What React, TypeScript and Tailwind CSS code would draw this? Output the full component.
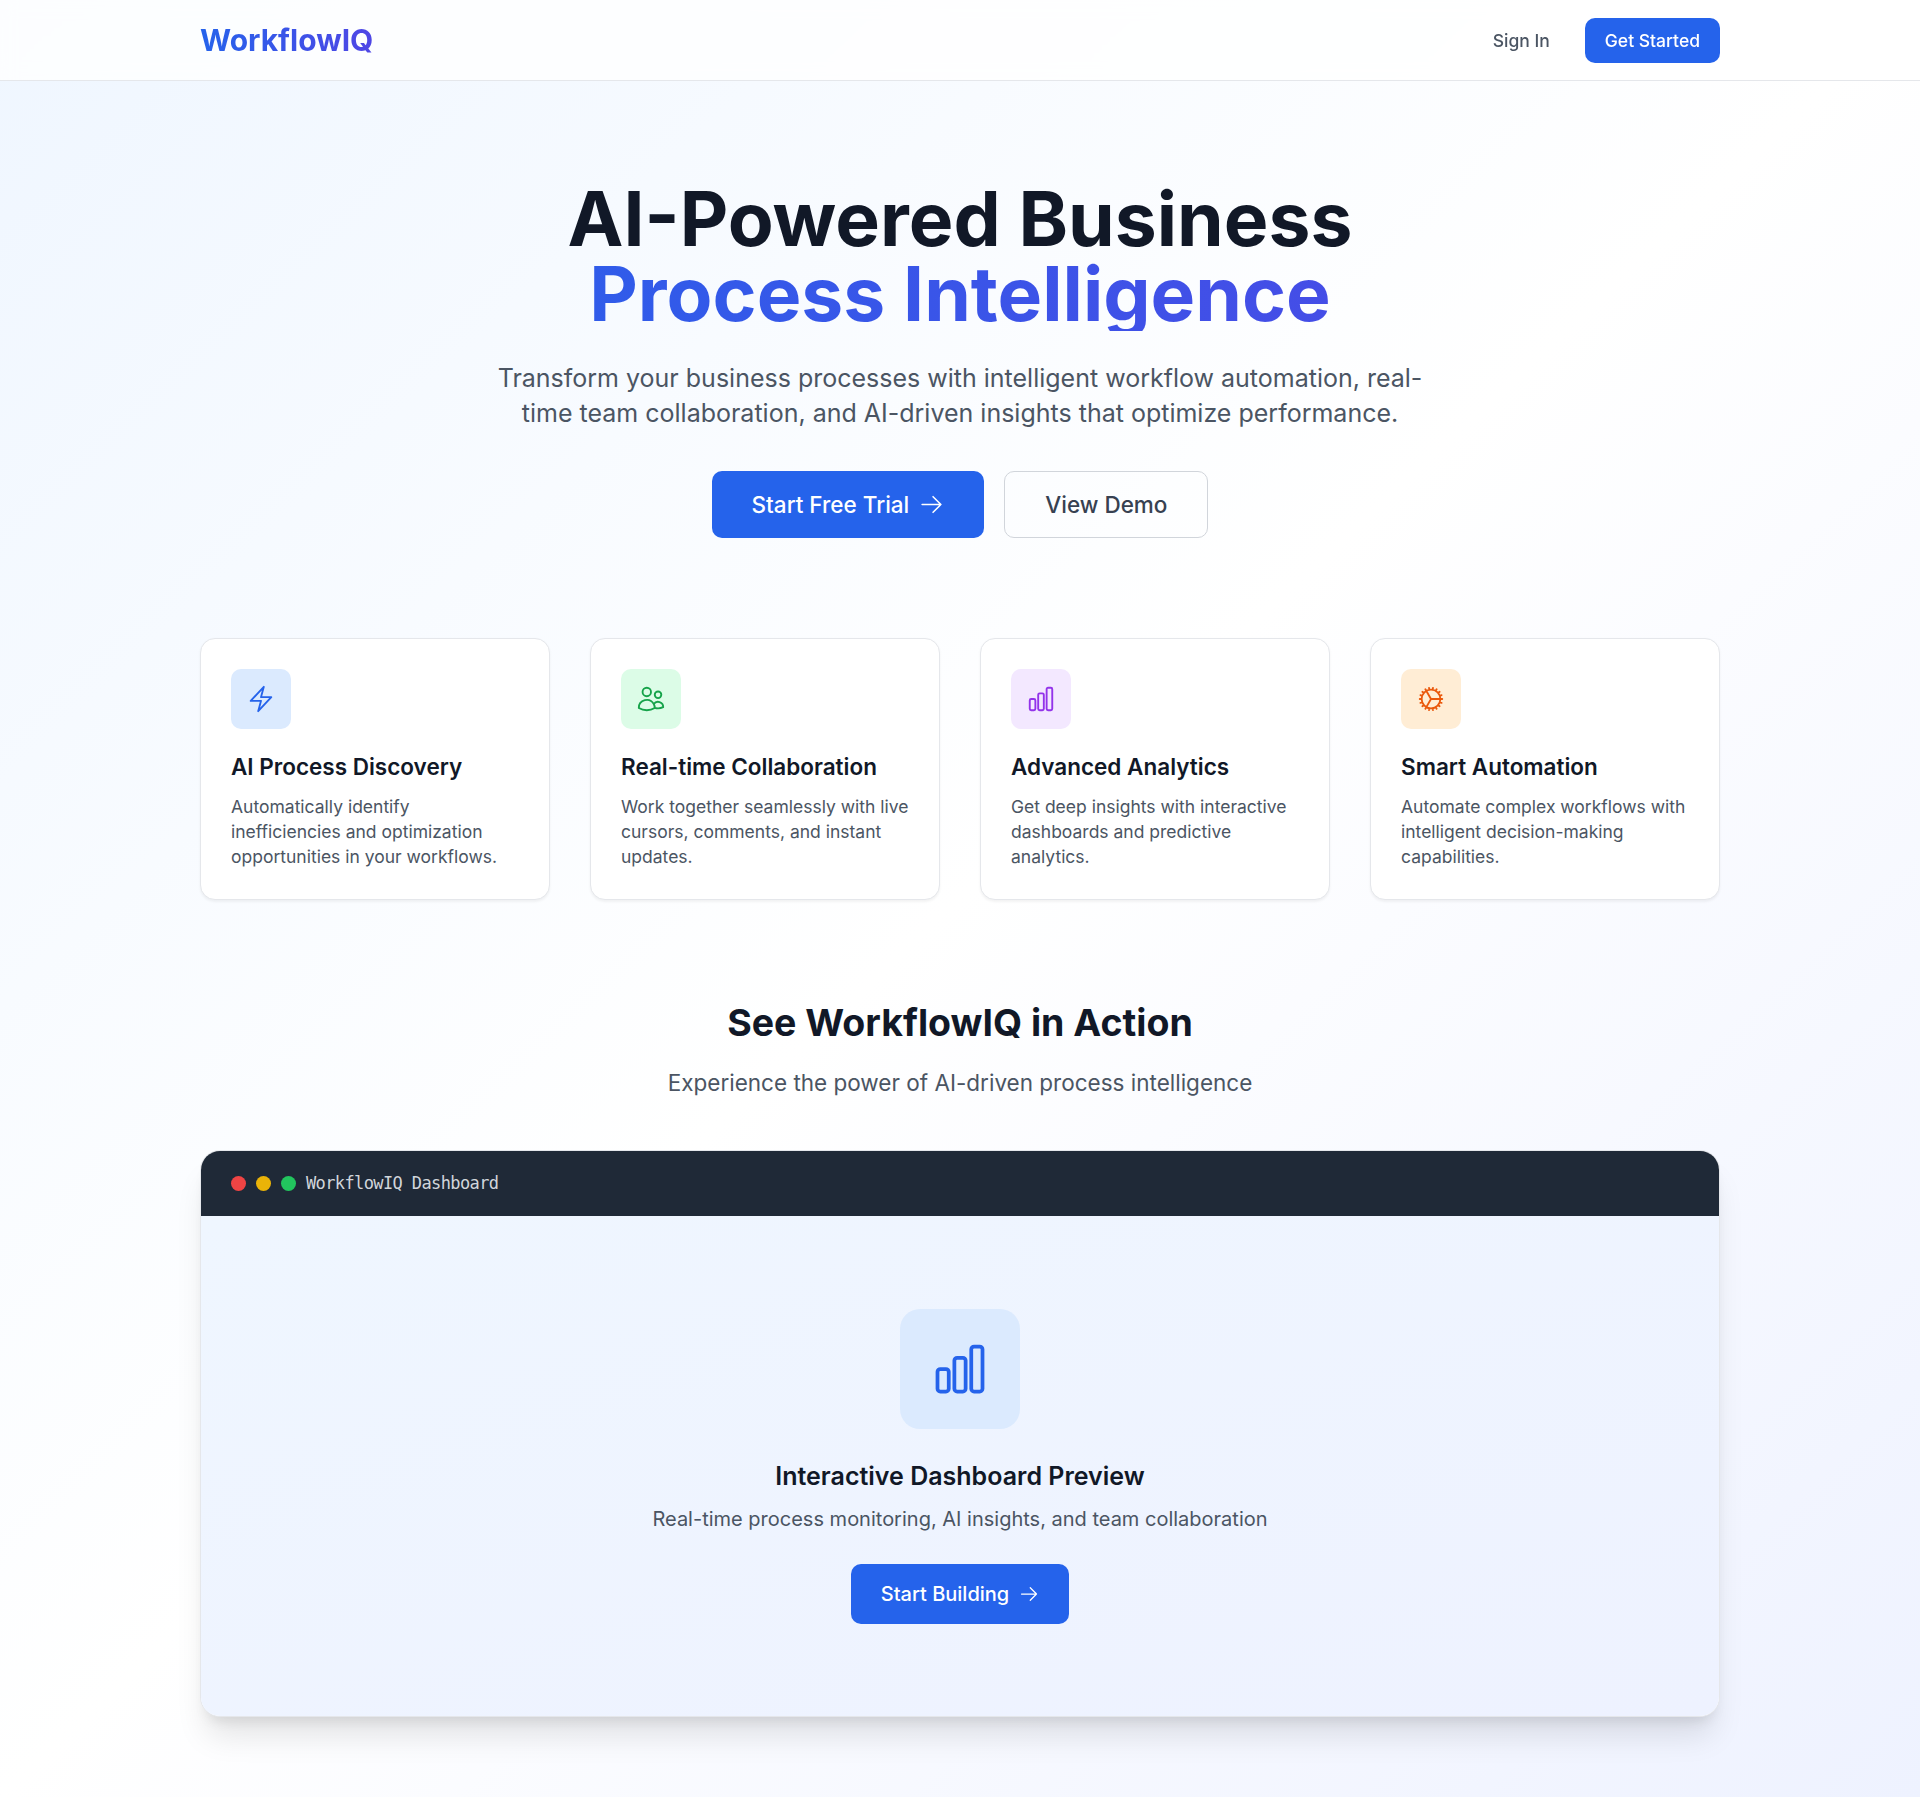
import type { ComponentType } from "react";
import {
  HiOutlineArrowRight,
  HiOutlineBolt,
  HiOutlineChartBar,
  HiOutlineCog,
  HiOutlineUsers,
} from "react-icons/hi2";

type Feature = {
  title: string;
  body: string;
  icon: ComponentType<{ className?: string }>;
  tile: string;
};

const features: Feature[] = [
  {
    title: "AI Process Discovery",
    body: "Automatically identify inefficiencies and optimization opportunities in your workflows.",
    icon: HiOutlineBolt,
    tile: "bg-[#dbeafe] text-[#2563eb]",
  },
  {
    title: "Real-time Collaboration",
    body: "Work together seamlessly with live cursors, comments, and instant updates.",
    icon: HiOutlineUsers,
    tile: "bg-[#dcfce7] text-[#16a34a]",
  },
  {
    title: "Advanced Analytics",
    body: "Get deep insights with interactive dashboards and predictive analytics.",
    icon: HiOutlineChartBar,
    tile: "bg-[#f3e8ff] text-[#9333ea]",
  },
  {
    title: "Smart Automation",
    body: "Automate complex workflows with intelligent decision-making capabilities.",
    icon: HiOutlineCog,
    tile: "bg-[#ffedd5] text-[#ea580c]",
  },
];

function Header() {
  return (
    <header className="border-b border-[#e5e7eb] bg-white/80 backdrop-blur-sm">
      <div className="mx-auto flex h-16 max-w-7xl items-center justify-between px-8">
        <div className="bg-[linear-gradient(to_right,#2563eb,#4f46e5)] bg-clip-text text-2xl leading-8 font-bold text-transparent">
          WorkflowIQ
        </div>
        <nav className="flex items-center gap-4">
          <a className="px-3 py-2 text-sm font-medium text-[#4b5563]">Sign In</a>
          <button className="rounded-lg bg-[#2563eb] px-4 py-2 text-sm font-medium text-white">
            Get Started
          </button>
        </nav>
      </div>
    </header>
  );
}

function Hero() {
  return (
    <section className="py-20 text-center">
      <h1 className="text-6xl leading-none font-bold text-[#111827]">
        AI-Powered Business
        <span className="block bg-[linear-gradient(to_right,#2563eb,#4f46e5)] bg-clip-text text-transparent">
          Process Intelligence
        </span>
      </h1>
      <p className="mx-auto mt-6 max-w-3xl text-xl leading-7 text-[#4b5563]">
        Transform your business processes with intelligent workflow automation, real-time team
        collaboration, and AI-driven insights that optimize performance.
      </p>
      <div className="mt-8 flex justify-center gap-4">
        <button className="flex items-center rounded-lg bg-[#2563eb] px-8 py-3 text-lg leading-7 font-medium text-white">
          Start Free Trial
          <HiOutlineArrowRight className="ml-2 h-5 w-5" />
        </button>
        <button className="rounded-lg border border-[#d1d5db] px-8 py-3 text-lg leading-7 font-medium text-[#374151]">
          View Demo
        </button>
      </div>
    </section>
  );
}

function FeatureCard({ title, body, icon: Icon, tile }: Feature) {
  return (
    <article className="rounded-xl border border-[#e5e7eb] bg-white p-6 shadow-[0_1.25px_2.5px_0_rgb(0_0_0/0.05)]">
      <div className={`mb-4 flex h-12 w-12 items-center justify-center rounded-lg ${tile}`}>
        <Icon className="h-6 w-6" />
      </div>
      <h3 className="mb-2 text-lg leading-7 font-semibold text-[#111827]">{title}</h3>
      <p className="text-sm leading-5 text-[#4b5563]">{body}</p>
    </article>
  );
}

function Preview() {
  return (
    <section className="pt-20 pb-16">
      <div className="mb-10 text-center">
        <h2 className="mb-4 text-3xl leading-9 font-bold text-[#111827]">See WorkflowIQ in Action</h2>
        <p className="text-lg leading-7 text-[#4b5563]">
          Experience the power of AI-driven process intelligence
        </p>
      </div>
      <div className="overflow-hidden rounded-2xl border border-[#e5e7eb] bg-white shadow-[0_25px_31.25px_-6.25px_rgb(0_0_0/0.1),0_10px_12.5px_-7.5px_rgb(0_0_0/0.1)]">
        <div className="flex items-center gap-2 bg-[#1f2937] px-6 py-4">
          <span className="h-3 w-3 rounded-full bg-[#ef4444]" />
          <span className="h-3 w-3 rounded-full bg-[#eab308]" />
          <span className="h-3 w-3 rounded-full bg-[#22c55e]" />
          <span className="font-['DejaVu_Sans_Mono',monospace] text-[17px] leading-5 tracking-[-0.61px] text-[#d1d5db]">
            WorkflowIQ Dashboard
          </span>
        </div>
        <div className="flex h-100 flex-col items-center justify-center bg-[linear-gradient(to_bottom_right,#eff6ff,#eef2ff)]">
          <div className="mb-6 flex h-24 w-24 items-center justify-center rounded-2xl bg-[#dbeafe]">
            <HiOutlineChartBar className="h-12 w-12 text-[#2563eb]" />
          </div>
          <h3 className="mb-2 text-xl leading-7 font-semibold text-[#111827]">
            Interactive Dashboard Preview
          </h3>
          <p className="mb-6 text-base text-[#4b5563]">
            Real-time process monitoring, AI insights, and team collaboration
          </p>
          <button className="flex items-center rounded-lg bg-[#2563eb] px-6 py-3 text-base font-medium text-white">
            Start Building
            <HiOutlineArrowRight className="ml-2 h-4 w-4" />
          </button>
        </div>
      </div>
    </section>
  );
}

export default function App() {
  return (
    <div className="min-h-screen bg-[linear-gradient(to_bottom_right,#eff6ff,#ffffff,#eef2ff)] font-['Inter',sans-serif]">
      {/* The whole page scales from a 20px root size. */}
      <style>{"html { font-size: 20px; }"}</style>
      <Header />
      <main className="mx-auto max-w-7xl px-8">
        <Hero />
        <div className="grid grid-cols-4 gap-8">
          {features.map((feature) => (
            <FeatureCard key={feature.title} {...feature} />
          ))}
        </div>
        <Preview />
      </main>
    </div>
  );
}
